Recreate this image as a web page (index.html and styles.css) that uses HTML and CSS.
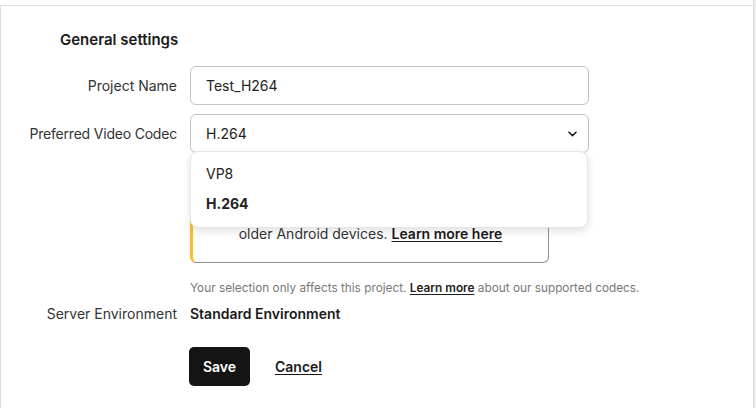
FILE: index.html
```html
<!DOCTYPE html>
<html>
<head>
<meta charset="utf-8">
<link rel="stylesheet" href="styles.css">
</head>
<body>
<div class="frame">
  <div class="card">
    <h2 class="heading">General settings</h2>
    <div class="row">
      <label class="label">Project Name</label>
      <div class="control">
        <div class="input">Test_H264</div>
      </div>
    </div>
    <div class="row row-codec">
      <label class="label label-tight">Preferred Video Codec</label>
      <div class="control select-wrap">
        <div class="input select">H.264
          <svg class="chevron" width="9" height="6" viewBox="0 0 9 6"><path d="M1 1.2 L4.5 4.6 L8 1.2" fill="none" stroke="#222" stroke-width="1.6" stroke-linecap="round" stroke-linejoin="round"/></svg>
        </div>
        <ul class="menu">
          <li class="opt">VP8</li>
          <li class="opt opt-selected">H.264</li>
        </ul>
      </div>
    </div>
    <div class="row">
      <div class="label"></div>
      <div class="control">
        <div class="notice">
          <p>H.264 offers the widest compatibility,<br>including Safari on iOS and<br>older Android devices. <a href="#" class="link">Learn more here</a></p>
        </div>
        <p class="helper">Your selection only affects this project. <a href="#" class="link">Learn more</a> about our supported codecs.</p>
      </div>
    </div>
    <div class="row row-env">
      <div class="label">Server Environment</div>
      <div class="control value">Standard Environment</div>
    </div>
    <div class="row row-actions">
      <div class="label"></div>
      <div class="control actions">
        <button class="btn-save">Save</button>
        <a href="#" class="link cancel">Cancel</a>
      </div>
    </div>
  </div>
  <div class="scrollbar"></div>
</div>
</body>
</html>
```
FILE: styles.css
```css
* { box-sizing: border-box; }
html, body { margin: 0; padding: 0; background: #fff; }
body {
  font-family: Inter, "Noto Sans", sans-serif;
  color: #222;
  width: 756px;
  height: 408px;
  overflow: hidden;
}
.frame {
  display: flex;
  height: 408px;
}
.card {
  flex: 1;
  margin-top: 5px;
  border-top: 1px solid #dedede;
  border-left: 1px solid #dedede;
  padding-top: 24px;
}
.scrollbar {
  width: 3px;
  background: #ececec;
  border-left: 1px solid #dcdcdc;
}
.heading {
  margin: 0 0 16px 59px;
  font-size: 15px;
  font-weight: 600;
  line-height: 20px;
  color: #1a1a1a;
}
.row {
  display: flex;
  align-items: flex-start;
  gap: 13px;
}
.label {
  width: 176px;
  flex: none;
  text-align: right;
  font-size: 14px;
  line-height: 39px;
  color: #333;
}
.label-tight { letter-spacing: -0.2px; }
.control {
  width: 399px;
  flex: none;
}
.row-codec { margin-top: 9px; position: relative; z-index: 2; }
.input {
  height: 39px;
  border: 1px solid #c3c3cb;
  border-radius: 6px;
  padding: 0 15px;
  font-size: 14px;
  line-height: 37px;
  color: #222;
  background: #fff;
}
.select-wrap { position: relative; }
.select { position: relative; }
.chevron {
  position: absolute;
  right: 11px;
  top: 16px;
}
.menu {
  position: absolute;
  left: 0;
  top: 37px;
  width: 398px;
  margin: 0;
  padding: 7px 0 8px;
  list-style: none;
  background: #fff;
  border: 1px solid #e6e6e6;
  border-radius: 8px;
  box-shadow: 0 3px 8px rgba(0,0,0,0.12);
}
.opt {
  height: 30px;
  line-height: 30px;
  padding: 0 15px;
  font-size: 14px;
  color: #222;
}
.opt-selected { font-weight: 700; }
.notice {
  margin-top: 10px;
  width: 359px;
  border: 1px solid #8f8f8f;
  border-left: 3px solid #fbbc2c;
  border-radius: 6px;
  padding: 20px 20px 18px;
}
.notice p {
  margin: 0;
  font-size: 14px;
  line-height: 20px;
  text-align: center;
  color: #333;
}
.link {
  color: #1a1a1a;
  font-weight: 600;
  text-decoration: underline;
  text-underline-offset: 2px;
}
.helper {
  margin: 17px 0 0;
  font-size: 11.8px;
  line-height: 16px;
  color: #777;
  white-space: nowrap;
}
.helper .link { color: #222; }
.row-env { margin-top: 8px; }
.row-env .label { line-height: 20px; }
.value {
  font-size: 14px;
  font-weight: 600;
  line-height: 20px;
  color: #1a1a1a;
}
.row-actions { margin-top: 23px; }
.actions {
  display: flex;
  align-items: center;
  gap: 25px;
}
.btn-save {
  height: 39px;
  width: 61px;
  margin-left: -1px;
  border: none;
  border-radius: 5px;
  background: #141414;
  color: #fff;
  font-family: Inter, "Noto Sans", sans-serif;
  font-size: 14px;
  font-weight: 600;
}
.cancel { font-size: 14px; }
```
